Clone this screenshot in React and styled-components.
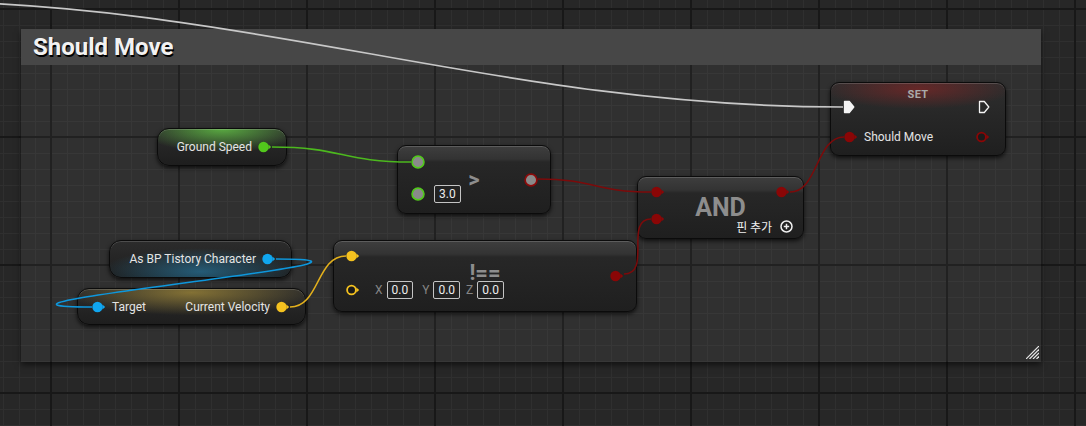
import React from 'react'
import styled, { createGlobalStyle } from 'styled-components'

const GlobalStyle = createGlobalStyle`
  html, body { margin: 0; padding: 0; background: #262626; }
  body { font-family: Roboto, "Noto Sans", "Noto Sans CJK KR", sans-serif; }
`

const Canvas = styled.div`
  position: relative;
  width: 1086px;
  height: 426px;
  overflow: hidden;
  background-color: #272727;
  background-image:
    linear-gradient(90deg, #181818 2px, transparent 2px),
    linear-gradient(180deg, #181818 2px, transparent 2px),
    linear-gradient(90deg, #2f2f2f 1px, transparent 1px),
    linear-gradient(180deg, #2f2f2f 1px, transparent 1px);
  background-size: 128px 128px, 128px 128px, 16px 16px, 16px 16px;
  background-position: 50px 0, 0 8px, 3px 0, 0 9px;
`

const Comment = styled.section`
  position: absolute;
  left: 21px;
  top: 29px;
  width: 1020px;
  height: 333px;
  display: flex;
  flex-direction: column;
  background: rgba(255, 255, 255, 0.045);
  box-shadow: 0 3px 6px rgba(0, 0, 0, 0.55);
`

const CommentHeader = styled.header`
  height: 36px;
  display: flex;
  align-items: center;
  padding-left: 12px;
  background: #474747;
  color: #f2f2f2;
  font-size: 24px;
  font-weight: 700;
  text-shadow: 1px 2px 0 #000;
`

const CommentBody = styled.div`
  flex: 1;
  display: flex;
  align-items: flex-end;
  justify-content: flex-end;
  padding: 0 2px 3px 0;
`

const Wires = styled.svg`
  position: absolute;
  left: 0;
  top: 0;
  z-index: 2;
  pointer-events: none;
`

const NodeBase = styled.div`
  position: absolute;
  z-index: 1;
  left: ${p => p.$x}px;
  top: ${p => p.$y}px;
  width: ${p => p.$w}px;
  height: ${p => p.$h}px;
  box-sizing: border-box;
  border: 1px solid #0b0b0b;
  border-radius: 9px;
  box-shadow: inset 0 1px 0 rgba(255, 255, 255, 0.16), 0 2px 4px rgba(0, 0, 0, 0.7);
  color: #e4e4e4;
  font-size: 12px;
`

const VarNode = styled(NodeBase)`
  border-radius: 12px;
  display: flex;
  align-items: center;
  justify-content: ${p => p.$justify || 'flex-end'};
  gap: 6px;
  padding: ${p => p.$pad};
  background: ${p => p.$tint}, linear-gradient(180deg, #2c2c2c, #1e1e1e);
`

const OpNode = styled(NodeBase)`
  display: grid;
  background: linear-gradient(180deg, #3e3e3e 0, #333 13px, #272727 16px, #1f1f1f 100%);
`

const Layer = styled.div`
  grid-area: 1 / 1;
  display: flex;
  align-items: center;
  justify-content: space-between;
  padding: ${p => p.$pad};
`

const Symbol = styled.div`
  grid-area: 1 / 1;
  display: flex;
  align-items: center;
  justify-content: center;
  padding-bottom: ${p => p.$lift || 0}px;
  color: #8d8d8d;
  font-size: ${p => p.$size}px;
  font-weight: 700;
`

const Inputs = styled.div`
  align-self: flex-start;
  margin-top: ${p => p.$top}px;
  display: flex;
  flex-direction: column;
  gap: ${p => p.$gap}px;
`

const Row = styled.div`
  display: flex;
  align-items: center;
  min-height: 14px;
  gap: ${p => p.$gap || 0}px;
`

const Field = styled.span`
  box-sizing: border-box;
  height: 18px;
  padding: 0 4px;
  border: 1px solid #c4c4c4;
  border-radius: 2px;
  line-height: 16px;
  color: #ededed;
`

const Axis = styled.span`
  display: flex;
  align-items: center;
  gap: 4px;
  margin-left: ${p => p.$ml}px;
  color: #858585;
`

const SetNode = styled(NodeBase)`
  display: flex;
  flex-direction: column;
  padding-top: 7px;
  background:
    radial-gradient(ellipse 55% 20px at 50% 6px, rgba(140, 36, 36, 0.6), rgba(120, 30, 30, 0)),
    linear-gradient(180deg, #2e2e2e, #1f1f1f);
`

const SetTitle = styled.div`
  height: 10px;
  line-height: 10px;
  text-align: center;
  color: #a9a9a9;
  font-size: 11px;
  font-weight: 700;
  letter-spacing: 0.3px;
`

const SetRow = styled.div`
  display: flex;
  align-items: center;
  justify-content: space-between;
  height: 14px;
  margin-top: ${p => p.$mt || 0}px;
  padding: ${p => p.$pad};
`

const RightColumn = styled.div`
  align-self: stretch;
  display: flex;
  flex-direction: column;
  align-items: flex-end;
  justify-content: space-between;
`

const AddPin = styled.div`
  display: flex;
  align-items: center;
  gap: 8px;
  color: #f0f0f0;
  font-family: "Noto Sans CJK KR", Roboto, sans-serif;
  font-size: 12px;
  line-height: 12px;
  margin-right: -3px;
`

const PinSvg = styled.svg`
  display: block;
  flex: none;
`

function DataPin({ color, kind = 'fill' }) {
  if (kind === 'socket') {
    return (
      <PinSvg width="14" height="14" viewBox="0 0 14 14">
        <circle cx="7" cy="7" r="5.9" fill="#8a8a8a" stroke={color} strokeWidth="1.7" />
      </PinSvg>
    )
  }
  const ring = kind === 'ring'
  return (
    <PinSvg width="14" height="12" viewBox="0 0 14 12">
      <circle cx="5.5" cy="6" r={ring ? 4.4 : 5.2} fill={ring ? '#1b1b1b' : color} stroke={ring ? color : 'none'} strokeWidth={ring ? 1.8 : 0} />
      <path d="M10.4 3.6 L13.2 6 L10.4 8.4 Z" fill={color} />
    </PinSvg>
  )
}

function ExecPin({ hollow }) {
  return (
    <PinSvg width="12" height="14" viewBox="0 0 12 14">
      <path
        d="M1.5 1.5 H6.3 L10.8 7 L6.3 12.5 H1.5 Z"
        fill={hollow ? 'none' : '#f4f4f4'}
        stroke="#f4f4f4"
        strokeWidth="1.3"
        strokeLinejoin="round"
      />
    </PinSvg>
  )
}

function PlusCircle() {
  return (
    <PinSvg width="13" height="13" viewBox="0 0 13 13">
      <circle cx="6.5" cy="6.5" r="5.5" fill="none" stroke="#f0f0f0" strokeWidth="1.5" />
      <path d="M6.5 3.8 V9.2 M3.8 6.5 H9.2" stroke="#f0f0f0" strokeWidth="1.5" />
    </PinSvg>
  )
}

function ResizeGrip() {
  return (
    <PinSvg width="13" height="13" viewBox="0 0 13 13">
      <g stroke="#e8e8e8" strokeWidth="1.2">
        <path d="M0 13 L13 0" />
        <path d="M3.5 13 L13 3.5" />
        <path d="M7 13 L13 7" />
        <path d="M10.5 13 L13 10.5" />
      </g>
    </PinSvg>
  )
}

const RED = '#8a0606'
const GREEN = '#52c81c'
const BLUE = '#10a6ef'
const YELLOW = '#f5c21f'

const wires = [
  { d: 'M -100 1 C 250 1, 493 107, 843 107', c: '#c8c8c8', w: 1.7 },
  { d: 'M 272 147 C 342 147, 342 162, 411 162', c: '#4cb81e', w: 1.6 },
  { d: 'M 538 179 C 595 179, 594 192, 651 192', c: '#7c0a0a', w: 1.5 },
  { d: 'M 624 274 C 652 274, 624 219, 651 219', c: '#7c0a0a', w: 1.5 },
  { d: 'M 790 192 C 818 192, 816 137, 844 137', c: '#7c0a0a', w: 1.5 },
  { d: 'M 276 259 C 450 259, -82 307, 92 307', c: '#0e97dc', w: 1.6 },
  { d: 'M 290 307 C 320 307, 316 256, 346 256', c: '#e3b01c', w: 1.6 },
]

export default function App() {
  return (
    <Canvas>
      <GlobalStyle />
      <Comment>
        <CommentHeader>Should Move</CommentHeader>
        <CommentBody>
          <ResizeGrip />
        </CommentBody>
      </Comment>

      <SetNode $x={830} $y={82} $w={176} $h={74}>
        <SetTitle>SET</SetTitle>
        <SetRow $pad="0 15px 0 12px">
          <ExecPin />
          <ExecPin hollow />
        </SetRow>
        <SetRow $mt={16} $pad="0 15px 0 13px">
          <Row $gap={6}>
            <DataPin color={RED} />
            <span>Should Move</span>
          </Row>
          <DataPin color={RED} kind="ring" />
        </SetRow>
      </SetNode>

      <VarNode
        $x={157} $y={128} $w={130} $h={38} $pad="0 14px 0 0"
        $tint="radial-gradient(ellipse 65% 65% at 50% 0%, rgba(100, 200, 70, 0.8), rgba(70, 140, 50, 0))"
      >
        <span>Ground Speed</span>
        <DataPin color={GREEN} />
      </VarNode>

      <OpNode $x={397} $y={145} $w={154} $h={69}>
        <Symbol $size={22}>&gt;</Symbol>
        <Layer $pad="0 12px 0 13px">
          <Inputs $top={9} $gap={16}>
            <Row>
              <DataPin color={GREEN} kind="socket" />
            </Row>
            <Row $gap={9}>
              <DataPin color={GREEN} kind="socket" />
              <Field>3.0</Field>
            </Row>
          </Inputs>
          <DataPin color="#8c0a0a" kind="socket" />
        </Layer>
      </OpNode>

      <OpNode $x={637} $y={176} $w={167} $h={63}>
        <Symbol $size={25}>AND</Symbol>
        <Layer $pad="8px 13px 5px 13px">
          <Inputs $top={0} $gap={13}>
            <Row><DataPin color={RED} /></Row>
            <Row><DataPin color={RED} /></Row>
          </Inputs>
          <RightColumn>
            <Row><DataPin color={RED} /></Row>
            <AddPin>
              <span>핀 추가</span>
              <PlusCircle />
            </AddPin>
          </RightColumn>
        </Layer>
      </OpNode>

      <VarNode
        $x={109} $y={240} $w={183} $h={38} $pad="0 15px 0 0"
        $tint="radial-gradient(ellipse 55% 65% at 50% 85%, rgba(40, 140, 190, 0.55), rgba(40, 140, 190, 0))"
      >
        <span>As BP Tistory Character</span>
        <DataPin color={BLUE} />
      </VarNode>

      <VarNode
        $x={77} $y={288} $w={229} $h={37} $pad="0 15px 0 14px" $justify="space-between"
        $tint="radial-gradient(ellipse 55% 65% at 50% 10%, rgba(190, 160, 60, 0.6), rgba(190, 160, 60, 0))"
      >
        <Row $gap={6}>
          <DataPin color={BLUE} />
          <span>Target</span>
        </Row>
        <Row $gap={6}>
          <span>Current Velocity</span>
          <DataPin color={YELLOW} />
        </Row>
      </VarNode>

      <OpNode $x={333} $y={240} $w={304} $h={72}>
        <Symbol $size={22} $lift={8}>!==</Symbol>
        <Layer $pad="0 12px 0 12px">
          <Inputs $top={8} $gap={18}>
            <Row><DataPin color={YELLOW} /></Row>
            <Row>
              <DataPin color={YELLOW} kind="ring" />
              <Axis $ml={15}>X<Field>0.0</Field></Axis>
              <Axis $ml={9}>Y<Field>0.0</Field></Axis>
              <Axis $ml={6}>Z<Field>0.0</Field></Axis>
            </Row>
          </Inputs>
          <DataPin color={RED} />
        </Layer>
      </OpNode>

      <Wires width="1086" height="426" viewBox="0 0 1086 426">
        {wires.map((w, i) => (
          <path key={i} d={w.d} fill="none" stroke={w.c} strokeWidth={w.w} />
        ))}
      </Wires>
    </Canvas>
  )
}
